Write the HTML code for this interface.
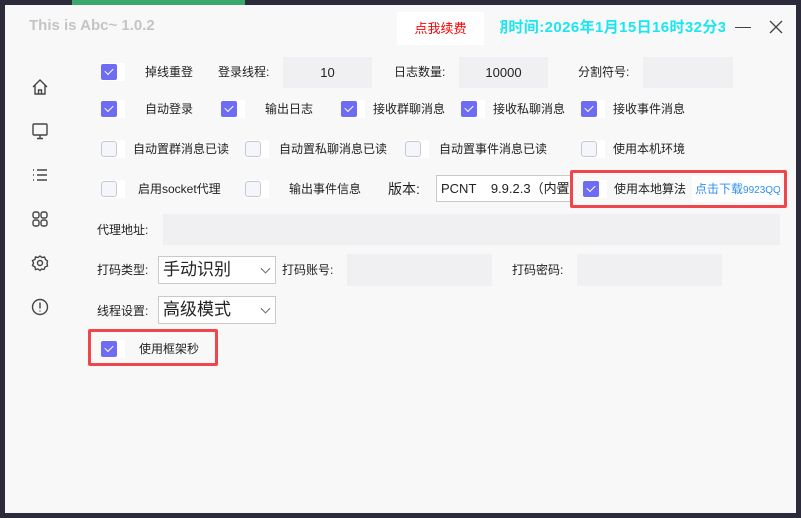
<!DOCTYPE html><html><head><meta charset="utf-8"><style>
*{margin:0;padding:0;box-sizing:border-box}
body{width:801px;height:518px;background:#2b2b3b;position:relative;overflow:hidden;font-family:"Liberation Sans","Noto Sans CJK SC",sans-serif;font-size:12px;color:#222}
.a{position:absolute;white-space:nowrap;line-height:16px}
#win{position:absolute;left:5px;top:5px;width:791px;height:508px;background:#f8f8f8}
.cb{position:absolute;width:16px;height:16px;border-radius:2px;background:#6e6cf4}
.cb::after{content:"";position:absolute;left:4px;top:4px;width:7px;height:4px;border-left:1.5px solid #fff;border-bottom:1.5px solid #fff;transform:rotate(-45deg)}
.cw{position:absolute;width:24px;height:18px;background:#fff}
.cu{position:absolute;width:16px;height:16px;border-radius:3px;background:#f5f5fc;border:1px solid #c8c8d0}
.in{position:absolute;background:#f0eff1;text-align:center;font-size:13px}
.sel{position:absolute;background:#fff;border:1px solid #c9c9c9;font-size:17px;padding-left:4px}
.sel::after{content:"";position:absolute;right:6px;top:50%;width:6px;height:6px;border-right:1px solid #666;border-bottom:1px solid #666;transform:translateY(-70%) rotate(45deg)}
.red{position:absolute;border:3px solid #f0464b;border-radius:2px}
svg{position:absolute}
</style></head><body>
<div class="a" style="left:72px;top:0;width:173px;height:5px;background:#3aa86a"></div>
<div id="win"></div>
<div class="a" style="left:29px;top:17px;font-size:15px;font-weight:bold;color:#c4c4c4;line-height:18px">This is Abc~ 1.0.2</div>
<div class="a" style="left:397px;top:12px;width:87px;height:33px;background:#fff;color:#f00;font-size:13px;text-align:center;line-height:33px">点我续费</div>
<div class="a" style="left:500px;top:18px;width:225px;height:20px;overflow:hidden;color:#19e6f0;font-size:15px;font-weight:bold;line-height:20px"><span style="position:absolute;left:-7px;letter-spacing:0.4px">期时间:2026年1月15日16时32分35</span></div>
<div class="a" style="left:735px;top:27px;width:16px;height:1px;background:#444"></div>
<svg style="left:769px;top:20px" width="14" height="14"><path d="M1 1L13 13M13 1L1 13" stroke="#444" stroke-width="1.3"/></svg>
<svg style="left:31px;top:78px" width="18" height="18" fill="none" stroke="#444" stroke-width="1.4"><path d="M2 9L9 2L16 9M4 7V16H14V7M7.5 16V12H10.5V16"/></svg>
<svg style="left:31px;top:122px" width="18" height="18" fill="none" stroke="#444" stroke-width="1.4"><rect x="2" y="2" width="14" height="11" rx="1"/><path d="M9 13V16M6 16.5H12"/></svg>
<svg style="left:31px;top:166px" width="18" height="18" fill="none" stroke="#444" stroke-width="1.4"><path d="M2 4H3M2 9H3M2 14H3M6 4H16M6 9H16M6 14H16"/></svg>
<svg style="left:31px;top:210px" width="18" height="18" fill="none" stroke="#444" stroke-width="1.4"><rect x="2" y="2" width="6" height="6" rx="2"/><rect x="10" y="2" width="6" height="6" rx="2"/><rect x="2" y="10" width="6" height="6" rx="2"/><rect x="10" y="10" width="6" height="6" rx="2"/></svg>
<svg style="left:31px;top:254px" width="18" height="18" fill="none" stroke="#444" stroke-width="1.4"><circle cx="9" cy="9" r="2.5"/><path d="M9 2L11 3.5L13.5 3L14.5 5.5L16.5 7L16 9.5L16.5 12L14 13L13 15.5L10.5 15L9 16.5L7 15L4.5 15.5L4 13L1.5 11.5L2.5 9L1.5 6.5L4 5.5L4.5 3L7 3.5Z"/></svg>
<svg style="left:31px;top:298px" width="18" height="18" fill="none" stroke="#444" stroke-width="1.4"><circle cx="9" cy="9" r="7.5"/><path d="M9 4.5V10.5M9 12.5V13.5"/></svg>

<div class="cw" style="left:101px;top:63px"></div><div class="cb" style="left:101px;top:64px"></div>
<div class="a" style="left:145px;top:64px">掉线重登</div>
<div class="a" style="left:218px;top:64px">登录线程:</div>
<div class="in" style="left:283px;top:57px;width:89px;height:31px;line-height:31px">10</div>
<div class="a" style="left:394px;top:64px">日志数量:</div>
<div class="in" style="left:459px;top:57px;width:89px;height:31px;line-height:31px">10000</div>
<div class="a" style="left:578px;top:64px">分割符号:</div>
<div class="in" style="left:643px;top:57px;width:90px;height:31px"></div>

<div class="cw" style="left:101px;top:100px"></div><div class="cb" style="left:101px;top:101px"></div><div class="a" style="left:145px;top:101px">自动登录</div>
<div class="cw" style="left:221px;top:100px"></div><div class="cb" style="left:221px;top:101px"></div><div class="a" style="left:265px;top:101px">输出日志</div>
<div class="cw" style="left:341px;top:100px"></div><div class="cb" style="left:341px;top:101px"></div><div class="a" style="left:373px;top:101px">接收群聊消息</div>
<div class="cw" style="left:461px;top:100px"></div><div class="cb" style="left:461px;top:101px"></div><div class="a" style="left:493px;top:101px">接收私聊消息</div>
<div class="cw" style="left:581px;top:100px"></div><div class="cb" style="left:581px;top:101px"></div><div class="a" style="left:613px;top:101px">接收事件消息</div>

<div class="cw" style="left:101px;top:140px"></div><div class="cu" style="left:101px;top:141px"></div><div class="a" style="left:133px;top:141px">自动置群消息已读</div>
<div class="cw" style="left:245px;top:140px"></div><div class="cu" style="left:245px;top:141px"></div><div class="a" style="left:279px;top:141px">自动置私聊消息已读</div>
<div class="cw" style="left:405px;top:140px"></div><div class="cu" style="left:405px;top:141px"></div><div class="a" style="left:439px;top:141px">自动置事件消息已读</div>
<div class="cw" style="left:581px;top:140px"></div><div class="cu" style="left:581px;top:141px"></div><div class="a" style="left:613px;top:141px">使用本机环境</div>

<div class="cw" style="left:101px;top:180px"></div><div class="cu" style="left:101px;top:181px"></div><div class="a" style="left:138px;top:181px">启用socket代理</div>
<div class="cw" style="left:245px;top:180px"></div><div class="cu" style="left:245px;top:181px"></div><div class="a" style="left:289px;top:181px">输出事件信息</div>
<div class="a" style="left:388px;top:180px;font-size:14px;line-height:18px">版本:</div>
<div class="sel" style="left:436px;top:175px;width:136px;height:27px;font-size:13px;line-height:25px;overflow:hidden;white-space:nowrap">PCNT&nbsp;&nbsp;&nbsp;&nbsp;9.9.2.3（内置</div>
<div class="red" style="left:570px;top:170px;width:217px;height:38px"></div>
<div class="cw" style="left:583px;top:180px"></div><div class="cb" style="left:583px;top:181px"></div>
<div class="a" style="left:614px;top:181px">使用本地算法</div>
<div class="a" style="left:692px;top:176px;width:88px;height:26px;background:#fff;color:#2f8ff0;line-height:26px;padding-left:3px;overflow:hidden">点击下载<span style="font-size:10px">9923QQ</span></div>

<div class="a" style="left:97px;top:222px">代理地址:</div>
<div class="in" style="left:163px;top:214px;width:617px;height:31px"></div>

<div class="a" style="left:97px;top:262px">打码类型:</div>
<div class="sel" style="left:158px;top:256px;width:118px;height:28px;line-height:26px">手动识别</div>
<div class="a" style="left:282px;top:262px">打码账号:</div>
<div class="in" style="left:347px;top:254px;width:145px;height:32px"></div>
<div class="a" style="left:512px;top:262px">打码密码:</div>
<div class="in" style="left:577px;top:254px;width:145px;height:32px"></div>

<div class="a" style="left:97px;top:303px">线程设置:</div>
<div class="sel" style="left:158px;top:296px;width:118px;height:28px;line-height:26px">高级模式</div>

<div class="red" style="left:88px;top:329px;width:130px;height:37px"></div>
<div class="cw" style="left:101px;top:340px"></div><div class="cb" style="left:101px;top:341px"></div>
<div class="a" style="left:139px;top:341px">使用框架秒</div>
</body></html>
